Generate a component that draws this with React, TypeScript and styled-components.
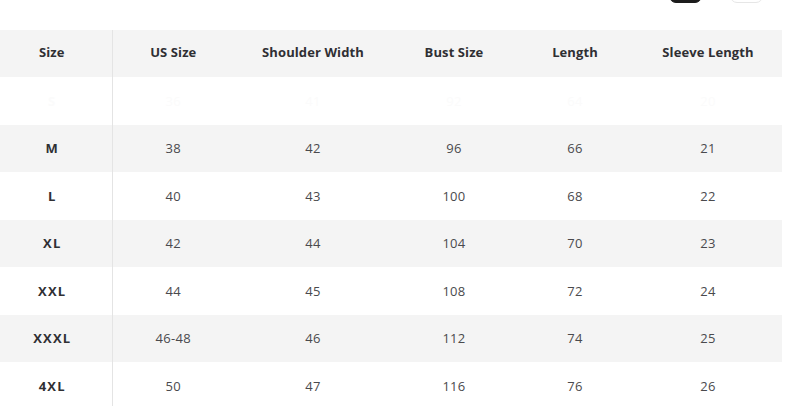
import styled, { createGlobalStyle } from "styled-components";

const GlobalStyle = createGlobalStyle`
  body {
    margin: 0;
    background: #ffffff;
    font-family: "Open Sans", "Liberation Sans", sans-serif;
  }
`;

type Row = {
  size: string;
  us: string;
  shoulder: string;
  bust: string;
  length: string;
  sleeve: string;
  ghost?: boolean;
};

const columns = [
  { label: "Size", width: 112 },
  { label: "US Size", width: 122 },
  { label: "Shoulder Width", width: 158 },
  { label: "Bust Size", width: 124 },
  { label: "Length", width: 118 },
  { label: "Sleeve Length", width: 148 },
];

const rows: Row[] = [
  { size: "S", us: "36", shoulder: "41", bust: "92", length: "64", sleeve: "20", ghost: true },
  { size: "M", us: "38", shoulder: "42", bust: "96", length: "66", sleeve: "21" },
  { size: "L", us: "40", shoulder: "43", bust: "100", length: "68", sleeve: "22" },
  { size: "XL", us: "42", shoulder: "44", bust: "104", length: "70", sleeve: "23" },
  { size: "XXL", us: "44", shoulder: "45", bust: "108", length: "72", sleeve: "24" },
  { size: "XXXL", us: "46-48", shoulder: "46", bust: "112", length: "74", sleeve: "25" },
  { size: "4XL", us: "50", shoulder: "47", bust: "116", length: "76", sleeve: "26" },
];

const App = () => {
  return (
    <Page>
      <GlobalStyle />
      <Toolbar>
        <ToolButton $dark />
        <ToolButton />
      </Toolbar>
      <Table>
        <colgroup>
          {columns.map((c) => (
            <col key={c.label} style={{ width: c.width }} />
          ))}
        </colgroup>
        <thead>
          <HeadRow>
            {columns.map((c) => (
              <HeadCell key={c.label}>{c.label}</HeadCell>
            ))}
          </HeadRow>
        </thead>
        <tbody>
          {rows.map((r, i) => (
            <BodyRow key={r.size} $striped={i % 2 === 1} $ghost={r.ghost}>
              <SizeCell>{r.size}</SizeCell>
              <Cell>{r.us}</Cell>
              <Cell>{r.shoulder}</Cell>
              <Cell>{r.bust}</Cell>
              <Cell>{r.length}</Cell>
              <Cell>{r.sleeve}</Cell>
            </BodyRow>
          ))}
        </tbody>
      </Table>
    </Page>
  );
};

const Page = styled.div`
  width: 794px;
  height: 406px;
  overflow: hidden;
  background: #ffffff;
`;

const Toolbar = styled.div`
  height: 30px;
  display: flex;
  justify-content: flex-end;
  gap: 28px;
  padding-right: 31px;
  overflow: hidden;
  & > * {
    margin-top: -27px;
  }
`;

const ToolButton = styled.div<{ $dark?: boolean }>`
  width: 33px;
  height: 30px;
  border-radius: 7px;
  box-sizing: border-box;
  background: ${(p) => (p.$dark ? "#1c1c1c" : "#ffffff")};
  border: 1px solid ${(p) => (p.$dark ? "#1c1c1c" : "#e6e6e6")};
`;

const Table = styled.table`
  width: 782px;
  table-layout: fixed;
  border-collapse: collapse;
  border-spacing: 0;
`;

const HeadRow = styled.tr`
  height: 47px;
  background: #f4f4f4;
`;

const HeadCell = styled.th`
  padding: 0 0 3px;
  text-align: center;
  vertical-align: middle;
  font-size: 13px;
  font-weight: 700;
  color: #2f2f33;
  letter-spacing: 0.1px;
  &:first-child {
    padding-right: 8px;
    border-right: 1px solid #e4e4e4;
  }
`;

const BodyRow = styled.tr<{ $striped: boolean; $ghost?: boolean }>`
  height: 47.5px;
  background: ${(p) => (p.$striped ? "#f4f4f4" : "#ffffff")};
  color: ${(p) => (p.$ghost ? "#fbfbfb" : "#4a4a4d")};
`;

const Cell = styled.td`
  padding: 0;
  text-align: center;
  vertical-align: middle;
  font-size: 13px;
  font-weight: 400;
  letter-spacing: 0.3px;
`;

const SizeCell = styled(Cell)`
  padding-right: 7px;
  font-weight: 700;
  letter-spacing: 1.2px;
  border-right: 1px solid #e4e4e4;
  tr:not(:first-child) > & {
    color: #2f2f33;
  }
`;

export default App;
